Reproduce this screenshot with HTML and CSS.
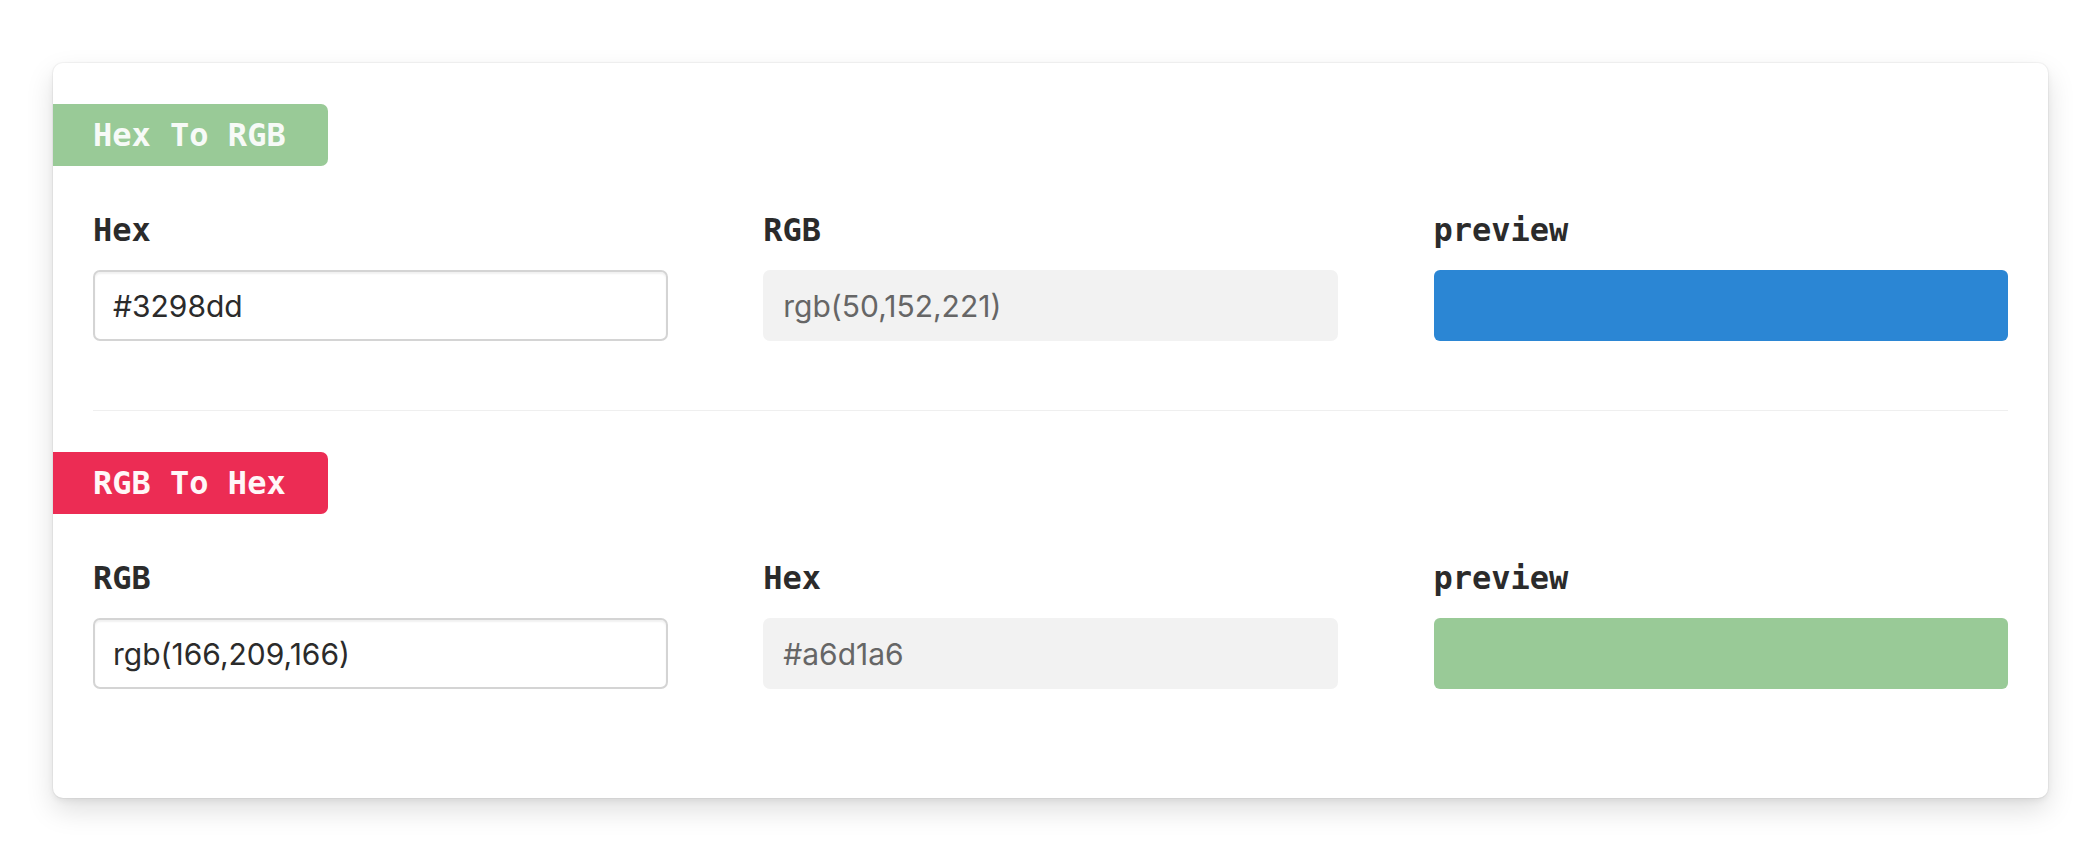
FILE: index.html
```html
<!DOCTYPE html>
<html lang="en">
<head>
<meta charset="utf-8">
<title>Color Converter</title>
<link rel="stylesheet" href="styles.css">
</head>
<body>
<div class="page">
  <div class="card">
    <section class="converter">
      <div class="badge badge-green">Hex To RGB</div>
      <div class="fields">
        <div class="field">
          <label class="field-label">Hex</label>
          <input class="text-input" type="text" value="#3298dd">
        </div>
        <div class="field">
          <label class="field-label">RGB</label>
          <input class="text-input readonly" type="text" readonly value="rgb(50,152,221)">
        </div>
        <div class="field">
          <label class="field-label">preview</label>
          <div class="preview preview-blue"></div>
        </div>
      </div>
    </section>
    <hr class="divider">
    <section class="converter">
      <div class="badge badge-red">RGB To Hex</div>
      <div class="fields">
        <div class="field">
          <label class="field-label">RGB</label>
          <input class="text-input" type="text" value="rgb(166,209,166)">
        </div>
        <div class="field">
          <label class="field-label">Hex</label>
          <input class="text-input readonly" type="text" readonly value="#a6d1a6">
        </div>
        <div class="field">
          <label class="field-label">preview</label>
          <div class="preview preview-green"></div>
        </div>
      </div>
    </section>
  </div>
</div>
</body>
</html>
```

FILE: styles.css
```css
* {
  box-sizing: border-box;
}

html, body {
  margin: 0;
  padding: 0;
  background: #ffffff;
}

body {
  font-family: Inter, "Liberation Sans", Arial, sans-serif;
  color: #2b2b2b;
}

.page {
  padding: 63px 44px 50px 53px;
}

.card {
  background: #ffffff;
  border-radius: 10px;
  padding: 41px 40px 40px;
  box-shadow: 0 0 0 1px rgba(0, 0, 0, 0.035), 0 3px 6px rgba(0, 0, 0, 0.06), 0 12px 28px rgba(0, 0, 0, 0.13);
}

.converter {
  padding-bottom: 69px;
}

.badge {
  display: inline-flex;
  align-items: center;
  height: 62px;
  margin-left: -40px;
  padding: 0 42px 0 40px;
  border-radius: 0 7px 7px 0;
  font-family: "DejaVu Sans Mono", monospace;
  font-weight: bold;
  font-size: 32px;
  color: #f7faf7;
  white-space: pre;
}

.badge-green {
  background: #99ca97;
}

.badge-red {
  background: #ec2c54;
  color: #fff7f8;
}

.fields {
  display: grid;
  grid-template-columns: repeat(3, 30%);
  justify-content: space-between;
  margin-top: 45px;
}

.field {
  display: flex;
  flex-direction: column;
}

.field-label {
  font-family: "DejaVu Sans Mono", monospace;
  font-weight: bold;
  font-size: 32px;
  line-height: 38px;
  color: #2b2b2b;
  margin-bottom: 21px;
}

.text-input {
  width: 100%;
  height: 71px;
  margin: 0;
  padding: 0 18px;
  border: 2px solid #d4d4d4;
  border-radius: 7px;
  background: #ffffff;
  box-shadow: inset 0 2px 2px rgba(0, 0, 0, 0.06);
  font-family: Inter, "Liberation Sans", Arial, sans-serif;
  font-size: 30px;
  color: #2b2b2b;
  outline: none;
}

.text-input.readonly {
  border-color: #f2f2f2;
  background: #f2f2f2;
  box-shadow: none;
  color: #666666;
}

.preview {
  height: 71px;
  border-radius: 6px;
}

.preview-blue {
  background: #2b86d4;
}

.preview-green {
  background: #99ca97;
}

.divider {
  border: 0;
  height: 1px;
  margin: 0 0 41px;
  background: #efefef;
}
```
